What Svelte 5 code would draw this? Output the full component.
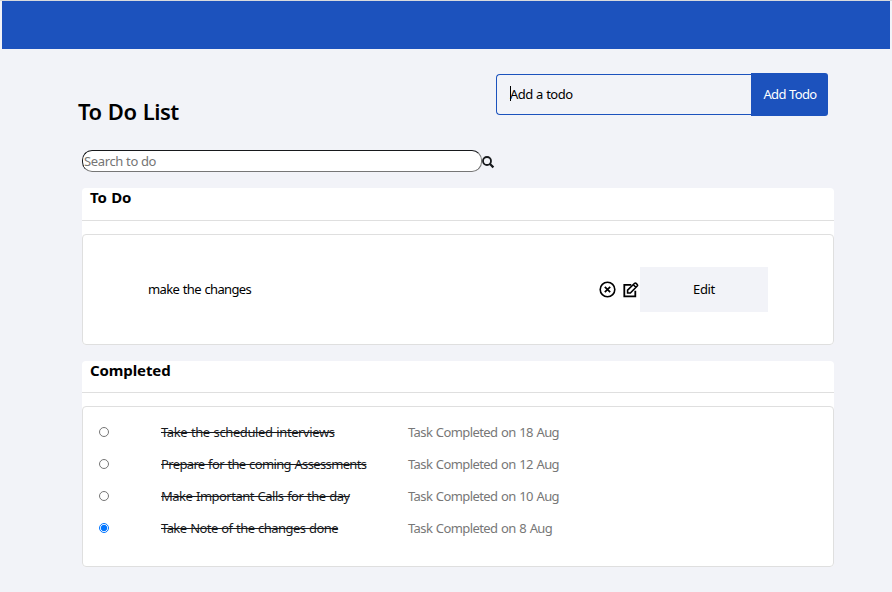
<script>
  let search = $state('');
  let selected = $state(3);
  const completed = [
    { title: 'Take the scheduled interviews', date: '18 Aug', tracking: -0.4 },
    { title: 'Prepare for the coming Assessments', date: '12 Aug', tracking: -0.64 },
    { title: 'Make Important Calls for the day', date: '10 Aug', tracking: -0.51 },
    { title: 'Take Note of the changes done', date: '8 Aug', tracking: -0.56 }
  ];
</script>

<div class="page">
  <nav></nav>
  <header>
    <h1>To Do List</h1>
    <form>
      <div class="field"><span class="caret"></span><span>Add a todo</span></div>
      <button class="add" type="button">Add Todo</button>
    </form>
  </header>

  <div class="search">
    <input type="text" placeholder="Search to do" bind:value={search} />
    <svg width="13" height="13" viewBox="0 0 13 13" fill="none" stroke="#17191c">
      <circle cx="5" cy="5" r="4" stroke-width="1.8" />
      <path d="M8 8L11.4 11.4" stroke-width="2.2" />
    </svg>
  </div>

  <section class="todo">
    <h2>To Do</h2>
    <div class="card task">
      <span class="name">make the changes</span>
      <svg class="remove" width="17" height="17" viewBox="0 0 17 17" fill="none" stroke="#000">
        <circle cx="8.5" cy="8.5" r="7.3" stroke-width="1.6" />
        <path d="M5.8 5.8L11.2 11.2M11.2 5.8L5.8 11.2" stroke-width="1.7" />
      </svg>
      <svg class="pencil" width="16" height="16" viewBox="0 0 16 16" fill="none" stroke="#000" stroke-width="1.8">
        <path d="M8.3 2.8H1.3V14.3H12.3V8.7" />
        <path d="M4.6 11V8.1L11.6 1.3Q12.4 .7 13.1 1.4L14.2 2.5Q14.9 3.2 14.2 4L7.4 11ZM10.3 2.7L12.9 5.3" stroke-width="1.6" />
      </svg>
      <button class="edit" type="button">Edit</button>
    </div>
  </section>

  <section class="done">
    <h2>Completed</h2>
    <div class="card list">
      {#each completed as item, i}
        <label>
          <input type="radio" name="completed" value={i} bind:group={selected} />
          <span class="title" style="letter-spacing: {item.tracking}px">{item.title}</span>
          <span class="date">Task Completed on {item.date}</span>
        </label>
      {/each}
    </div>
  </section>
</div>

<style>
  :global(body) { background: #f2f3f8; overflow: hidden; }
  * { box-sizing: border-box; }
  .page {
    height: 592px;
    border-top: 1px solid #d8dadd;
    font: 13px/20px "Trebuchet MS", "Noto Sans", sans-serif;
    letter-spacing: -0.35px;
    color: #000;
  }
  button, input { font: inherit; letter-spacing: inherit; }
  nav { height: 48px; margin: 0 2px; background: #1c52bd; }
  header { display: flex; height: 101px; padding: 24px 64px 0 78px; justify-content: space-between; }
  h1 { margin: 23px 0 0; font-size: 22px; line-height: 30px; font-weight: 600; letter-spacing: -0.5px; word-spacing: 1px; }
  form { display: flex; align-items: center; height: 43px; }
  .field { display: flex; align-items: center; width: 255px; height: 41px; padding: 0 0 2px 13px; border: 1px solid #1c52bd; border-right: 0; border-radius: 4px 0 0 4px; letter-spacing: -0.5px; word-spacing: 0.4px; }
  .caret { width: 1px; height: 15px; margin-right: -1px; background: #000; }
  .add { width: 77px; height: 43px; padding: 0 0 2px 1px; border: 0; border-radius: 0 3px 3px 0; background: #1c52bd; color: #fff; letter-spacing: -0.65px; word-spacing: 0.6px; }
  .search { display: flex; align-items: center; height: 22px; margin-left: 82px; }
  .search input { width: 400px; height: 22px; padding: 0 0 0 1px; border: 1px solid #767676; border-top-color: #17191c; border-left-color: #17191c; border-radius: 10px; background: #fff; outline: 0; }
  .search input::placeholder { color: #757575; opacity: 1; }
  .search svg { margin-top: 2px; }
  section { width: 752px; margin: 16px 0 0 82px; background: #fff; border-radius: 4px; }
  h2 { height: 33px; margin: 0 0 13px; padding-left: 8px; border-bottom: 1px solid #dfdfdf; font-size: 15px; line-height: 18px; font-weight: 700; letter-spacing: -0.2px; word-spacing: 1px; }
  .done h2 { height: 32px; letter-spacing: -0.1px; }
  .card { border: 1px solid #dfdfdf; border-radius: 4px; }
  .task { display: flex; align-items: center; height: 111px; padding: 0 65px; }
  .name { flex: 1; padding-bottom: 2px; letter-spacing: -0.64px; word-spacing: 0.8px; }
  .remove { margin-right: 7px; }
  .pencil { margin-right: 1px; }
  .edit { width: 128px; height: 45px; padding: 0 0 2px; border: 0; background: #f2f3f8; color: #000; }
  .list { height: 161px; padding: 9px 16px; }
  label { display: flex; align-items: center; height: 32px; word-spacing: 0.8px; }
  label input { appearance: none; width: 10px; height: 10px; margin: 0 52px 0 0; border: 1px solid #767676; border-radius: 50%; background: #fff; }
  label input:checked { border-color: #0075ff; background: radial-gradient(circle, #0075ff 2.8px, #fff 3.6px); }
  .title { width: 247px; color: #17191c; text-decoration: line-through; }
  .date { color: #777; letter-spacing: -0.6px; }
</style>
